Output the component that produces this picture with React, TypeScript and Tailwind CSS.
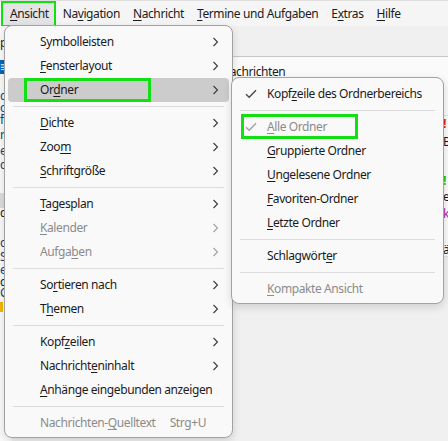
import React from "react";

const GREEN = "border-[#12e012]";

function Label({ text }: { text: string }) {
  const i = text.indexOf("&");
  if (i < 0) return <span>{text}</span>;
  return (
    <span>
      {text.slice(0, i)}
      <span className="underline decoration-1 underline-offset-[2px]">{text[i + 1]}</span>
      {text.slice(i + 2)}
    </span>
  );
}

function Chevron({ dim }: { dim?: boolean }) {
  return (
    <svg width="7" height="10" viewBox="0 0 7 10" className="shrink-0">
      <path d="M1.5 1 L5.5 5 L1.5 9" fill="none" stroke={dim ? "#a0a0a0" : "#3a3a3a"} strokeWidth="1.1" />
    </svg>
  );
}

function Check({ dim }: { dim?: boolean }) {
  return (
    <svg width="12" height="10" viewBox="0 0 12 10">
      <path d="M1 5.2 L4.2 8.3 L11 1.3" fill="none" stroke={dim ? "#a3a3a3" : "#4a4a4a"} strokeWidth="1.4" />
    </svg>
  );
}

type Item = {
  label: string;
  arrow?: boolean;
  disabled?: boolean;
  active?: boolean;
  shortcut?: string;
  check?: boolean;
  boxed?: boolean;
};

function Sep({ inset }: { inset: string }) {
  return <div className={`h-px my-[4px] bg-[#dcdcdc] ${inset}`} />;
}

function MainRow({ item }: { item: Item }) {
  return (
    <div
      className={`relative flex items-center h-6 mx-[3px] rounded-[4px] pl-[32px] pr-[10px] ${
        item.active ? "bg-[#cccccc]" : ""
      } ${item.disabled ? "text-[#8b8b8b]" : "text-[#1b1b1b]"}`}
    >
      <div className="flex-1 whitespace-nowrap">
        <Label text={item.label} />
      </div>
      {item.shortcut && <span className="mr-[13px] text-[#8b8b8b]">{item.shortcut}</span>}
      {item.arrow && <Chevron dim={item.disabled} />}
      {item.boxed && (
        <div className={`absolute left-[16px] top-0 w-[127px] h-[24px] border-[3px] ${GREEN}`} />
      )}
    </div>
  );
}

function SubRow({ item }: { item: Item }) {
  return (
    <div
      className={`relative flex items-center h-6 mx-[3px] pl-[32px] ${
        item.disabled ? "text-[#8b8b8b]" : "text-[#1b1b1b]"
      }`}
    >
      {item.check && (
        <div className="absolute left-[10px] top-[7px]">
          <Check dim={item.disabled} />
        </div>
      )}
      <span className="whitespace-nowrap">
        <Label text={item.label} />
      </span>
      {item.boxed && (
        <div className={`absolute left-[6px] top-[-1px] w-[117px] h-[25px] border-[3px] ${GREEN}`} />
      )}
    </div>
  );
}

const mainGroups: Item[][] = [
  [
    { label: "Symbolleisten", arrow: true },
    { label: "&Fensterlayout", arrow: true },
    { label: "Or&dner", arrow: true, active: true, boxed: true },
  ],
  [
    { label: "&Dichte", arrow: true },
    { label: "Zoo&m", arrow: true },
    { label: "&Schriftgröße", arrow: true },
  ],
  [
    { label: "&Tagesplan", arrow: true },
    { label: "&Kalender", arrow: true, disabled: true },
    { label: "Aufga&ben", arrow: true, disabled: true },
  ],
  [
    { label: "So&rtieren nach", arrow: true },
    { label: "T&hemen", arrow: true },
  ],
  [
    { label: "Kopf&zeilen", arrow: true },
    { label: "Nachricht&eninhalt", arrow: true },
    { label: "&Anhänge eingebunden anzeigen" },
  ],
  [{ label: "Nachrichten-&Quelltext", disabled: true, shortcut: "Strg+U" }],
];

const subGroups: Item[][] = [
  [{ label: "Kopf&zeile des Ordnerbereichs", check: true }],
  [
    { label: "&Alle Ordner", check: true, disabled: true, boxed: true },
    { label: "&Gruppierte Ordner" },
    { label: "&Ungelesene Ordner" },
    { label: "&Favoriten-Ordner" },
    { label: "&Letzte Ordner" },
  ],
  [{ label: "Schlagwört&er" }],
  [{ label: "&Kompakte Ansicht", disabled: true }],
];

const menuBar = ["Na&vigation", "&Nachricht", "&Termine und Aufgaben", "E&xtras", "&Hilfe"];

// folder pane peeking out at the left edge: [height, glyph, classes]
const folderSliver: [number, string, string][] = [
  [8, "", ""],
  [17, "p", "text-[#222]"],
  [9, "", ""],
  [14, "≡", "bg-[#0067c0] text-white"],
  [16, "", ""],
  [12, "c", ""],
  [11, "g", ""],
  [14, "f", ""],
  [16, "r", ""],
  [15, "e", ""],
  [14, "c", ""],
  [21, "", ""],
  [15, "", "bg-[#dddddd]"],
  [10, "d", "text-[#222]"],
  [17, "", ""],
  [15, "c", ""],
  [14, "S", ""],
  [11, "ei", ""],
  [13, "d", "text-[#222]"],
  [10, "C", ""],
  [4, "", ""],
  [10, "", "bg-[#f2b600] w-[3px]"],
];

export default function App() {
  return (
    <div
      className="relative w-[448px] h-[441px] overflow-hidden bg-[#f0f0f0] text-[12px] tracking-[-0.4px] text-[#1b1b1b]"
      style={{ fontFamily: '"Noto Sans", "Open Sans", sans-serif' }}
    >
      {/* menu bar */}
      <div className="flex items-center h-[26px] bg-[#f5f5f5] border-t border-[#dedede] pl-[1px]">
        <div className={`flex items-center h-[26px] pl-[7px] pr-[5px] bg-[#e4e4e6] border-[2px] ${GREEN}`}>
          <Label text="&Ansicht" />
        </div>
        <div className="flex items-center gap-[13px] ml-[7px]">
          {menuBar.map((m) => (
            <span key={m} className="whitespace-nowrap">
              <Label text={m} />
            </span>
          ))}
        </div>
      </div>

      {/* window content behind the menus */}
      <div className="flex h-[415px]">
        <div className="w-[12px] shrink-0 bg-[#fafafa] flex flex-col text-[#1c3f78] overflow-hidden">
          {folderSliver.map(([h, g, cls], i) => (
            <div
              key={i}
              className={`shrink-0 flex items-center overflow-visible ${cls}`}
              style={{ height: h }}
            >
              {g}
            </div>
          ))}
        </div>
        <div className="flex-1 min-w-0 flex flex-col">
          <div className="h-[31px] shrink-0 bg-[#f0f0f0] border-b border-[#c6c6c6]" />
          <div className="flex">
            <div className="w-[431px] shrink-0 bg-[#fafafa] flex flex-col whitespace-nowrap">
              <div className="h-[30px] flex items-center pl-[209px]">Nachrichten</div>
              <div className="h-[169px] border-b border-[#e2e2e2]" />
            </div>
            <div className="w-[60px] shrink-0 bg-[#fafafa] flex flex-col whitespace-nowrap">
              <div className="h-[59px] border-b border-[#e2e2e2]" />
              <div className="h-[16px] leading-[16px] text-[#e02020] font-bold">!</div>
              <div className="h-[19px] leading-[19px]">Betreff</div>
              <div className="h-[22px]" />
              <div className="h-[15px] leading-[15px] text-[#10c010] font-bold">!</div>
              <div className="h-[18px] leading-[18px]">eine</div>
              <div className="h-[15px] leading-[15px] text-[#9a2fa8]">kurz</div>
              <div className="h-[22px]" />
              <div className="h-[14px] leading-[14px] border-b border-[#e2e2e2]">ä</div>
            </div>
          </div>
        </div>
      </div>

      {/* main dropdown */}
      <div className="absolute left-[4px] top-[25px] w-[229px] pt-[4px] pb-[2px] bg-[#f9f9f9] border border-[#a2a2a2] rounded-[8px] shadow-[0_3px_8px_rgba(0,0,0,0.14)]">
        {mainGroups.map((g, gi) => (
          <div key={gi}>
            {gi > 0 && <Sep inset="mx-[8px]" />}
            {g.map((it) => (
              <MainRow key={it.label} item={it} />
            ))}
          </div>
        ))}
      </div>

      {/* submenu */}
      <div className="absolute left-[231px] top-[77px] w-[213px] pt-[4px] pb-[2px] bg-[#f9f9f9] border border-[#a2a2a2] rounded-[8px] shadow-[0_3px_8px_rgba(0,0,0,0.14)]">
        {subGroups.map((g, gi) => (
          <div key={gi}>
            {gi > 0 && <Sep inset="mx-[8px]" />}
            {g.map((it) => (
              <SubRow key={it.label} item={it} />
            ))}
          </div>
        ))}
      </div>
    </div>
  );
}
